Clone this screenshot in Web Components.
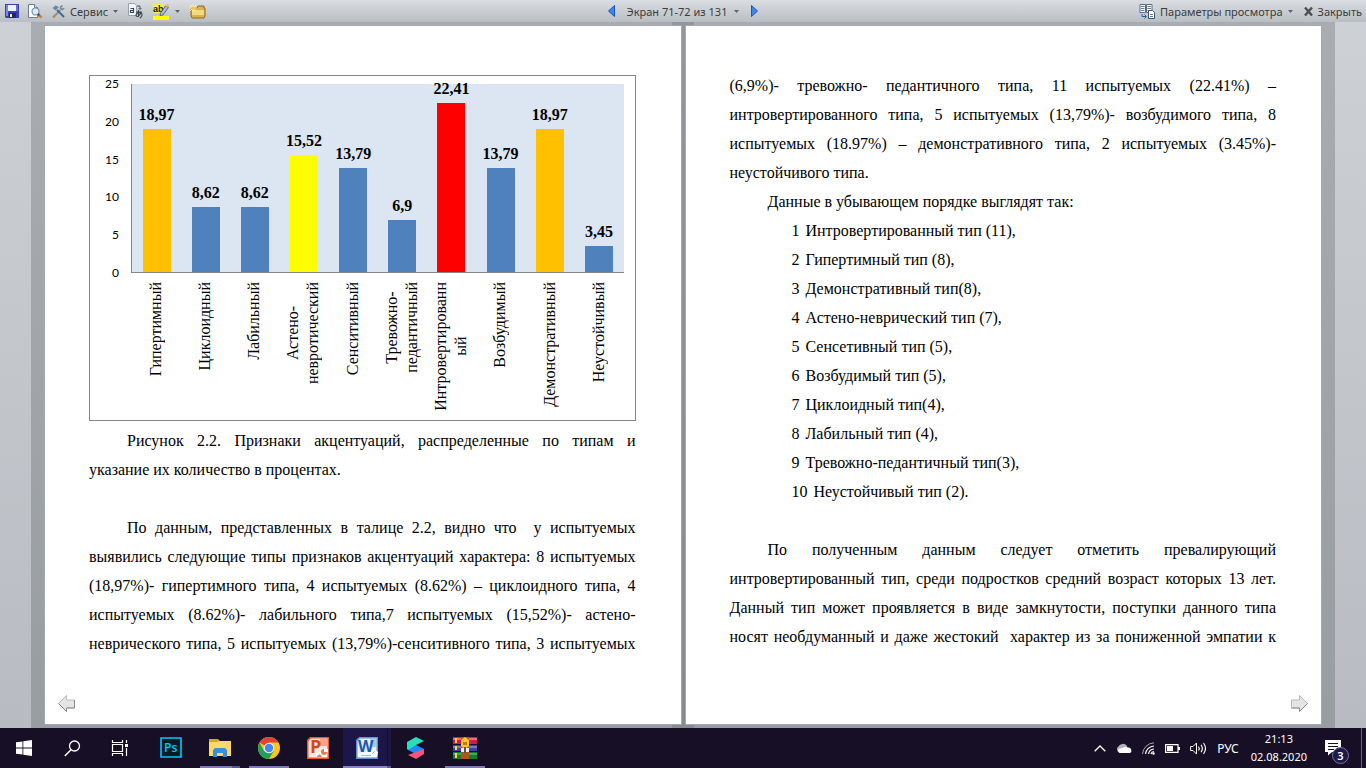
<!DOCTYPE html>
<html lang="ru">
<head>
<meta charset="utf-8">
<title>Режим чтения</title>
<style>
  html, body { margin: 0; height: 100%; }
  body { font-family: "Noto Sans", "Open Sans", sans-serif; font-size: 11px; color: #3b3b3b; overflow: hidden; }
</style>
</head>
<body>
<reader-app></reader-app>

<script>
const ICONS = {
  save: `<svg viewBox="0 0 14 14" width="14" height="14"><path d="M0 0h14v14H1L0 13z" fill="#3b3fb4"/><path d="M1 1h2v11H1z" fill="#7d86e2"/><path d="M3 1h8v6H3z" fill="#eef2fb"/><path d="M11 1h2v6h-2z" fill="#6670d4"/><path d="M4 9h7v5H4z" fill="#23266e"/><path d="M5 10h2v3H5z" fill="#f4f6ff"/></svg>`,
  preview: `<svg viewBox="0 0 15 15" width="15" height="15"><path d="M.5.5h6l3 3v10h-9z" fill="#fff" stroke="#6c7d92"/><path d="M6.500.500v3h3" fill="#dbe4ee" stroke="#6c7d92"/><circle cx="7.500" cy="7.500" r="3.500" fill="#d9ecf9" stroke="#7790aa" stroke-width="1.200"/><path d="M10 10.500l3.500 3" stroke="#c08038" stroke-width="2.800"/><path d="M9.800 10l1.500 1.300" stroke="#3d4654" stroke-width="2"/></svg>`,
  tools: `<svg viewBox="0 0 13 13" width="13" height="13"><path d="M1.500 12l7-7" stroke="#8a9198" stroke-width="2"/><path d="M1 12.500l2.500-2.500" stroke="#c08a3c" stroke-width="2"/><path d="M12.300 3l-2 1.500-1.800-1.300.2-1.200L10.500.500" fill="none" stroke="#6f8295" stroke-width="1.500"/><path d="M.500 3l3-2.500L7 2 3.500 5.500z" fill="#6c86a3"/><path d="M5 5l7 7" stroke="#46688f" stroke-width="2"/></svg>`,
  translate: `<svg viewBox="0 0 17 16" width="17" height="16"><path d="M1.500.500h6l2 2v10h-8z" fill="#f4f6f8" stroke="#98a2ad"/><path d="M3.500 5.500h3v4h-3v-2h3" fill="none" stroke="#3c4450" stroke-width="1.200"/><path d="M10 3h3v3M11.500 5L13 6.500 14.500 5" fill="none" stroke="#4d5866"/><path d="M9 9h6M11.500 7v7M14 9c-1 4-5 6-5 3s7-3 6 0-1 2-2 3" fill="none" stroke="#3c4450" stroke-width="1.100"/></svg>`,
  marker: `<svg viewBox="0 0 17 17" width="17" height="17"><path d="M0 1h10v9H0z" fill="#f6ee52"/><text x="0" y="9" font-family="Liberation Sans, sans-serif" font-size="9" font-weight="bold" fill="#111">ab</text><path d="M7.500 10l5-7 3 1.500-5.500 7.500-3 .500z" fill="#a9b9d2" stroke="#44566f" stroke-width=".8"/><path d="M12.500 3l1.500-2 2.500 1-1 2.500z" fill="#eebf4f"/><path d="M0 13h16v4H0z" fill="#ffff00"/></svg>`,
  folder: `<svg viewBox="0 0 17 15" width="17" height="15"><path d="M2 4h6l1-2h6v2h1v8l-1 2H3l-1-2z" fill="#dab34c" stroke="#8c6c1d"/><path d="M3 6h12v5H3z" fill="#f3d980"/><path d="M4 0v8M0 4h8M1 1l6 6M7 1L1 7" stroke="#fff3a8"/><circle cx="4" cy="4" r="1.500" fill="#ffc42e"/></svg>`,
  caret: `<svg viewBox="0 0 5 3" width="5" height="3"><path d="M0 0h5L2.500 3z" fill="#5e646b"/></svg>`,
  prev: `<svg viewBox="0 0 7 12" width="7" height="12"><path d="M6.500.500v11L.500 6z" fill="#3d86f0" stroke="#1c55bd"/></svg>`,
  next: `<svg viewBox="0 0 7 12" width="7" height="12"><path d="M.500.500v11L6.500 6z" fill="#3d86f0" stroke="#1c55bd"/></svg>`,
  options: `<svg viewBox="0 0 16 16" width="16" height="16"><path d="M1 1.500h5.500v8H1zM7.500 1.500H13v8H7.500z" fill="#fff" stroke="#5a6d86"/><path d="M2 3.500h3.500M2 5.500h3.500M2 7.500h3.500M8.500 3.500H12M8.500 5.500H12M8.500 7.500H12" stroke="#6d7f97"/><path d="M9.500 7.500h4l2 2v6h-6z" fill="#fff" stroke="#3f556f"/><path d="M11 11.500h3M11 13.500h3" stroke="#6d7f97"/><path d="M3 11v2.500h4M5.500 11.500l2 2-2 2" fill="none" stroke="#2d5e94"/></svg>`,
  close: `<svg viewBox="0 0 9 9" width="9" height="9"><path d="M1 .500L8 8.500M8 .500L1 8.500" stroke="#4b4f54" stroke-width="2.400"/></svg>`,
  pageLeft: `<svg viewBox="0 0 18 17" width="18" height="17"><path d="M.500 8.500l8-8V5h8v8h-8v3.500z" fill="#e4e4e4" stroke="#bcbcbc"/><path d="M.500 8.500l8 8V13h8V5" fill="none" stroke="#8d8d8d"/></svg>`,
  pageRight: `<svg viewBox="0 0 18 17" width="18" height="17"><path d="M17.500 8.500l-8-8V5h-8v8h8v3.500z" fill="#e4e4e4" stroke="#bcbcbc"/><path d="M17.500 8.500l-8 8V13h-8" fill="none" stroke="#8d8d8d"/></svg>`,
  windows: `<svg viewBox="0 0 16 16" width="16" height="16" fill="#fff"><path d="M0 2.300L6.500 1.400v6.200H0zM7.300 1.300L16 0v7.600H7.300zM0 8.400h6.500v6.200L0 13.700zM7.300 8.400H16V16l-8.700-1.300z"/></svg>`,
  search: `<svg viewBox="0 0 17 17" width="17" height="17"><circle cx="10.500" cy="6" r="5" fill="none" stroke="#fff" stroke-width="1.300"/><path d="M7 9.800L.800 16" stroke="#fff" stroke-width="1.500"/></svg>`,
  tasks: `<svg viewBox="0 0 16 16" width="16" height="16" fill="none" stroke="#fff"><path d="M.500 0v2.500h10V0M.500 16v-2.500h10V16M.500 4.500h10v7H.500zM14.500 0v3M14.500 8v8" stroke-width="1.200"/><path d="M13 4h3v3h-3z" fill="#fff" stroke="none"/></svg>`,
  ps: `<svg viewBox="0 0 22 22" width="22" height="22"><path d="M1 1h20v19H1z" fill="#001d26" stroke="#00c8ff" stroke-width="1.600"/><text x="4" y="15" font-family="Open Sans, sans-serif" font-size="12" font-weight="600" fill="#00c8ff">Ps</text></svg>`,
  explorer: `<svg viewBox="0 0 22 20" width="22" height="20"><path d="M0 1h9l2 2h10v15H0z" fill="#e2a21a"/><path d="M0 4h9l1-1h12v15H0z" fill="#ffd869"/><path d="M4 19v-7l2-2h10l2 2v7h-4v-4H8v4z" fill="#3a8fdc"/></svg>`,
  chrome: `<svg viewBox="0 0 22 22" width="22" height="22"><circle cx="11" cy="11" r="11" fill="#fbc51b"/><path d="M11 11L1.500 5.500A11 11 0 0 1 20.500 5.500H11z" fill="#dc4437"/><path d="M1.500 5.500A11 11 0 0 0 11 22l5-8.500-5 2.500-5-2z" fill="#1fa15d"/><circle cx="11" cy="11" r="5.200" fill="#f4f4f4"/><circle cx="11" cy="11" r="4.200" fill="#4486f4"/></svg>`,
  powerpoint: `<svg viewBox="0 0 22 22" width="22" height="22"><path d="M3 0h19v22H0V3z" fill="#e5572c"/><path d="M4 1.500h16.500v19h-19V4z" fill="#fbe6dc"/><path d="M13 2h7v7h-7z" fill="#f2a58a"/><text x="3" y="16" font-family="Open Sans, sans-serif" font-size="18" font-weight="bold" fill="#d24a1c">P</text><path d="M9 16l11-2v6H9z" fill="#fff"/><circle cx="17" cy="15" r="3" fill="#e77a56"/><path d="M17 15h4v-3h-4z" fill="#fff"/><path d="M10 19l3-2 2 3h-5z" fill="#e9825e"/></svg>`,
  word: `<svg viewBox="0 0 22 22" width="22" height="22"><path d="M3 0h19v22H0V3z" fill="#5d92cf"/><path d="M4 1.500h16.500v19h-19V4z" fill="#e3eef9"/><path d="M14 2h6v8h-6z" fill="#a9c8ea"/><path d="M2 16l10-1 4-2 2-1 4 3-1 5H2z" fill="#fff"/><path d="M5 18.500h10M16 17l3-3" stroke="#9ebde0"/><text x="2" y="15" font-family="Open Sans, sans-serif" font-size="16" font-weight="bold" fill="#1d58b0">W</text></svg>`,
  spark: `<svg viewBox="0 0 18 22" width="18" height="22"><path d="M0 5l9-5 8 4-8 4 0 3-8 2-1-1z" fill="#27e0b9"/><path d="M1 13l8-5 8 4-8 5z" fill="#1c8dff"/><path d="M17 12v5l-8 5-8-4 8-3z" fill="#ff527f"/></svg>`,
  winrar: `<svg viewBox="0 0 24 22" width="24" height="22"><path d="M0 0h24v7H0z" fill="#c81f49"/><path d="M0 1h24v2H0z" fill="#ef6b86"/><path d="M0 8h24v6H0z" fill="#45409b"/><path d="M0 9h24v2H0z" fill="#7975cf"/><path d="M0 15h24v7H0z" fill="#187a36"/><path d="M0 16h24v2H0z" fill="#39aa5a"/><path d="M2 1h2v5H2zM2 9h2v4H2zM2 16h2v5H2z" fill="#ffd544"/><path d="M8 0h8v22H8z" fill="#b45417"/><path d="M8 3l4-3 4 3v6l-4 3-4-3z" fill="#ffc52e"/><path d="M10 5h4v3h-4z" fill="#cf7515"/><path d="M8 11h8v4H8z" fill="#f6f1e8"/><path d="M11 10h2v6h-2z" fill="#555"/></svg>`,
  up: `<svg viewBox="0 0 12 7" width="12" height="7"><path d="M.700 6.300L6 1l5.300 5.300" fill="none" stroke="#fff" stroke-width="1.300"/></svg>`,
  cloud: `<svg viewBox="0 0 16 10" width="16" height="10"><path d="M3 9a3 3 0 0 1-.500-5.500A5 5 0 0 1 11 3l1 6z" fill="#b3b0b9"/><path d="M3.500 10a2.500 2.500 0 0 1 0-4.500L7 5a4 4 0 0 1 5-.500 3 3 0 0 1 2 5.500z" fill="#fff"/></svg>`,
  wifi: `<svg viewBox="0 0 13 13" width="13" height="13" fill="none" stroke="#fff"><path d="M.500 12A12 12 0 0 1 12 .800" stroke="#a9a6b0"/><path d="M3.500 12A9 9 0 0 1 12 4M6.500 12A6 6 0 0 1 12 7M9 12a3.500 3.500 0 0 1 3-2.500" stroke-width="1.200"/><circle cx="11.500" cy="11.500" r="1.200" fill="#fff" stroke="none"/></svg>`,
  battery: `<svg viewBox="0 0 15 9" width="15" height="9"><path d="M.600.600h12.400v7.800H.600z" fill="none" stroke="#fff" stroke-width="1.200"/><path d="M2 2h6v5H2zM13 3h2v3h-2z" fill="#fff"/></svg>`,
  volume: `<svg viewBox="0 0 17 13" width="17" height="13" fill="none" stroke="#fff"><path d="M.600 4.500H3l3.500-3.500v11L3 8.500H.600z"/><path d="M8.500 4.500q1.500 2 0 4M11 2.800q2.600 3.700 0 7.400M13.500 1q4 5.500 0 11" stroke-width="1.100"/></svg>`,
  notes: `<svg viewBox="0 0 16 16" width="16" height="16"><path d="M0 0h16v12H7l-4 3.500V12H0z" fill="#fff"/><path d="M3 3.500h10M3 6.500h10M3 9.500h6" stroke="#170f26"/></svg>`
};

function define(name, render) {
  customElements.define(name, class extends HTMLElement {
    connectedCallback() {
      if (this.shadowRoot) return;
      this.attachShadow({ mode: 'open' }).innerHTML = render(this);
    }
  });
}

define('ui-icon', el => `
  <style>:host { display: inline-flex; flex: none; } svg { display: block; overflow: visible; }</style>
  ${ICONS[el.getAttribute('name')]}`);

define('tool-button', el => `
  <style>
    :host { display: flex; }
    button { all: unset; display: flex; align-items: center; gap: var(--tool-gap, 5px); height: 22px; white-space: nowrap; cursor: default; }
  </style>
  <button type="button" aria-label="${el.getAttribute('label')}">
    ${el.hasAttribute('icon') ? `<ui-icon name="${el.getAttribute('icon')}"></ui-icon>` : ''}
    <slot></slot>
    ${el.hasAttribute('menu') ? '<ui-icon name="caret"></ui-icon>' : ''}
  </button>`);

define('reader-toolbar', () => `
  <style>
    :host { display: grid; grid-template-columns: 1fr auto 1fr; align-items: center; height: 22px;
            background: linear-gradient(#dadee2, #b9bec4); }
    div { display: flex; align-items: center; }
    .left { gap: 9px; padding-left: 5px; }
    .center { gap: 12px; --tool-gap: 7px; }
    .right { justify-content: flex-end; gap: 11px; padding-right: 4px; }
  </style>
  <div class="left">
    <tool-button icon="save" label="Сохранить"></tool-button>
    <tool-button icon="preview" label="Просмотр"></tool-button>
    <tool-button icon="tools" menu label="Сервис">Сервис</tool-button>
    <tool-button icon="translate" label="Перевод"></tool-button>
    <tool-button icon="marker" menu label="Выделение"></tool-button>
    <tool-button icon="folder" label="Создать примечание"></tool-button>
  </div>
  <div class="center">
    <tool-button icon="prev" label="Назад"></tool-button>
    <tool-button menu label="Экран 71-72 из 131">Экран 71-72 из 131</tool-button>
    <tool-button icon="next" label="Вперёд"></tool-button>
  </div>
  <div class="right">
    <tool-button icon="options" menu label="Параметры просмотра">Параметры просмотра</tool-button>
    <tool-button icon="close" label="Закрыть">Закрыть</tool-button>
  </div>`);

const BARS = [
  ['Гипертимный', '18,97', '#ffc000'], ['Циклоидный', '8,62'], ['Лабильный', '8,62'],
  ['Астено-<br>невротический', '15,52', '#ffff00'], ['Сенситивный', '13,79'],
  ['Тревожно-<br>педантичный', '6,9'], ['Интровертированн<br>ый', '22,41', '#ff0000'],
  ['Возбудимый', '13,79'], ['Демонстративный', '18,97', '#ffc000'], ['Неустойчивый', '3,45']
];

define('bar-chart', () => `
  <style>
    :host { display: grid; grid-template: 189px 1fr / 29px 1fr; column-gap: 12px; box-sizing: border-box;
            height: 346px; padding: 8px 11px 0 0; border: 1px solid #868686; color: #000; }
    .axis { display: flex; flex-direction: column; justify-content: space-between; margin: -7px 0;
            font: 12px/14px Lato, sans-serif; text-align: right; }
    .plot, .names { display: grid; grid-template-columns: repeat(10, 1fr); }
    .plot { background: #dce6f2; border-left: 1px solid #868686; border-bottom: 1px solid #868686; }
    .col { display: flex; flex-direction: column; justify-content: flex-end; align-items: center; }
    .col b { font-size: 16px; line-height: 18px; margin-bottom: 5px; }
    .bar { width: 28px; }
    .names { grid-column: 2; padding-top: 9px; }
    .name { display: flex; justify-content: center; align-items: flex-start; min-width: 0; }
    .name span { writing-mode: vertical-rl; transform: rotate(180deg); text-align: center;
                 white-space: nowrap; font-size: 16px; line-height: 20px; }
  </style>
  <div class="axis">${[25, 20, 15, 10, 5, 0].map(n => `<span>${n}</span>`).join('')}</div>
  <div class="plot">${BARS.map(([, v, c = '#4f81bd']) => `<div class="col"><b>${v}</b><div class="bar" style="flex:0 0 ${parseFloat(v.replace(',', '.')) * 4}%;background:${c}"></div></div>`).join('')}</div>
  <div class="names">${BARS.map(([n]) => `<div class="name"><span>${n}</span></div>`).join('')}</div>`);

define('book-page', el => `
  <style>
    :host { display: flex; flex-direction: column; min-width: 0; background: #fff; color: #000;
            font-family: "Liberation Serif", "Times New Roman", serif; font-size: 16px; line-height: 29px; }
    main { padding: 45px 45px 0 44px; flex: 1; min-height: 0; }
    footer { display: flex; padding: 0 13px 12px; }
    :host([side="right"]) footer { justify-content: flex-end; }
    button { all: unset; display: flex; }
  </style>
  <main><slot></slot></main>
  <footer><button type="button" aria-label="Перелистнуть"><ui-icon name="${el.getAttribute('side') === 'right' ? 'pageRight' : 'pageLeft'}"></ui-icon></button></footer>`);

define('reader-spread', () => `
  <style>
    :host { display: block; padding: 0 31px; background: linear-gradient(#cdd1d5, #b8bcc2); min-height: 0; }
    .spread { display: grid; grid-template-columns: 1fr 1fr; gap: 5px; height: 100%; box-sizing: border-box;
              padding: 4px 14px;
              background: linear-gradient(#92979b, #868b8f) 50% 0 / 22px 100% no-repeat, linear-gradient(#a9adb1, #989da1); }
    book-page { box-shadow: 0 0 0 1px #a3a9b2; }
    bar-chart { margin-top: 4px; margin-bottom: 5px; }
    p, ol { margin: 0; }
    p { text-align: justify; text-align-last: justify; text-indent: 38px; white-space: nowrap; }
    p.flush { text-indent: 0; }
    p.short { text-align-last: left; }
    .end { display: block; text-align-last: left; text-indent: 0; }
    .gap { margin-top: 29px; }
    ol { list-style: none; padding: 0 0 0 62px; }
    li { display: flex; gap: 6px; }
  </style>
  <div class="spread">
    <book-page side="left">
      <bar-chart></bar-chart>
      <p>Рисунок 2.2. Признаки акцентуаций, распределенные по типам и<br><span class="end">указание их количество в процентах.</span></p>
      <p class="gap">По данным, представленных в талице 2.2, видно что &nbsp;у испытуемых<br>выявились следующие типы признаков акцентуаций характера: 8 испытуемых<br>(18,97%)- гипертимного типа, 4 испытуемых (8.62%) – циклоидного типа, 4<br>испытуемых (8.62%)- лабильного типа,7 испытуемых (15,52%)- астено-<br>неврического типа, 5 испытуемых (13,79%)-сенситивного типа, 3 испытуемых</p>
    </book-page>
    <book-page side="right">
      <p class="flush">(6,9%)- тревожно- педантичного типа, 11 испытуемых (22.41%) –<br>интровертированного типа, 5 испытуемых (13,79%)- возбудимого типа, 8<br>испытуемых (18.97%) – демонстративного типа, 2 испытуемых (3.45%)-<br><span class="end">неустойчивого типа.</span></p>
      <p class="short">Данные в убывающем порядке выглядят так:</p>
      <ol>
        ${['Интровертированный тип (11),', 'Гипертимный тип (8),', 'Демонстративный тип(8),', 'Астено-неврический тип (7),', 'Сенсетивный тип (5),', 'Возбудимый тип (5),', 'Циклоидный тип(4),', 'Лабильный тип (4),', 'Тревожно-педантичный тип(3),', 'Неустойчивый тип (2).'].map((t, i) => `<li><span>${i + 1}</span><span>${t}</span></li>`).join('')}
      </ol>
      <p class="gap">По полученным данным следует отметить превалирующий<br>интровертированный тип, среди подростков средний возраст которых 13 лет.<br>Данный тип может проявляется в виде замкнутости, поступки данного типа<br>носят необдуманный и даже жестокий &nbsp;характер из за пониженной эмпатии к</p>
    </book-page>
  </div>`);

define('task-button', el => `
  <style>
    :host { display: block; width: 48px; height: 40px; }
    button { all: unset; box-sizing: border-box; display: flex; width: 100%; height: 100%;
             align-items: center; justify-content: center; }
    :host([running]) button { background: linear-gradient(#7f78bd, #7f78bd) 50% 100% / 40px 2px no-repeat; }
    :host([stacked]) button { background: linear-gradient(90deg, #7f78bd 32px, #5d588c 32px) 50% 100% / 40px 2px no-repeat; }
    :host([active]) button { background: linear-gradient(90deg, #8a83c8 44px, #5d588c 44px) 0 100% / 100% 2px no-repeat,
                             linear-gradient(90deg, #1c1748 44px, #120f35 44px, #120f35 45px, #1c1740 45px); }
  </style>
  <button type="button" aria-label="${el.getAttribute('label')}"><ui-icon name="${el.getAttribute('icon')}"></ui-icon></button>`);

define('task-bar', () => `
  <style>
    :host { display: flex; justify-content: space-between; height: 40px; background: #170f26; color: #fff; }
    nav, .tray { display: flex; align-items: center; }
    .apps { display: flex; gap: 1px; margin-left: 3px; }
    .tray { gap: 10px; padding-right: 4px; }
    .lang { font-size: 12px; }
    time { display: flex; flex-direction: column; text-align: center; line-height: 18px; margin-left: 2px; }
    .notes { position: relative; display: flex; margin-left: 8px; margin-right: 10px; }
    .badge { position: absolute; left: 7px; top: 7px; width: 15px; height: 15px; border: 1px solid #77749a;
             border-radius: 50%; background: #1d1a4b; font-size: 11px; font-weight: 600; line-height: 15px; text-align: center; }
    .edge { width: 1px; height: 40px; background: #6a6574; }
  </style>
  <nav>
    <task-button icon="windows" label="Пуск"></task-button>
    <task-button icon="search" label="Поиск"></task-button>
    <task-button icon="tasks" label="Представление задач"></task-button>
    <div class="apps">
      <task-button icon="ps" label="Photoshop"></task-button>
      <task-button icon="explorer" stacked label="Проводник"></task-button>
      <task-button icon="chrome" running label="Chrome"></task-button>
      <task-button icon="powerpoint" label="PowerPoint"></task-button>
      <task-button icon="word" active label="Word"></task-button>
      <task-button icon="spark" label="Spark AR"></task-button>
      <task-button icon="winrar" running label="WinRAR"></task-button>
    </div>
  </nav>
  <div class="tray">
    <ui-icon name="up"></ui-icon><ui-icon name="cloud"></ui-icon><ui-icon name="wifi"></ui-icon>
    <ui-icon name="battery"></ui-icon><ui-icon name="volume"></ui-icon>
    <span class="lang">РУС</span>
    <time datetime="2020-08-02T21:13"><span>21:13</span><span>02.08.2020</span></time>
    <div class="notes"><ui-icon name="notes"></ui-icon><span class="badge">3</span></div>
    <div class="edge"></div>
  </div>`);

define('reader-app', () => `
  <style>
    :host { display: grid; grid-template-rows: auto 1fr auto; height: 100vh; }
  </style>
  <reader-toolbar></reader-toolbar>
  <reader-spread></reader-spread>
  <task-bar></task-bar>`);
</script>
</body>
</html>
